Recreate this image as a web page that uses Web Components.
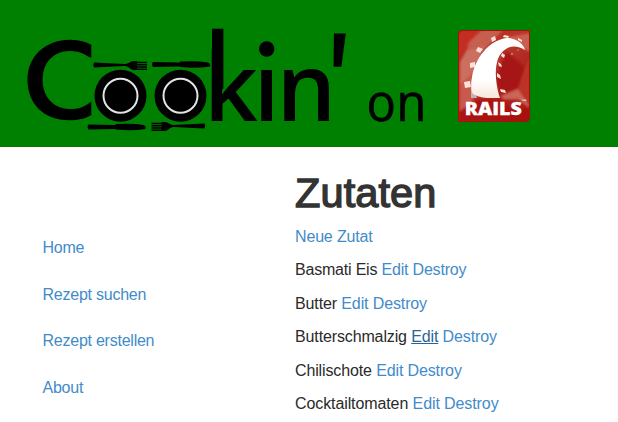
<!DOCTYPE html>
<html lang="de"><head><meta charset="utf-8"><title>Cookin' on Rails</title>
<style>
body{margin:0;background:#fff;color:#2a2a2a;font-family:"Liberation Sans",Arial,sans-serif;font-size:16px;letter-spacing:-.16px;overflow:hidden}
</style></head><body>
<cook-page></cook-page>
<script>
const define=(name,html)=>customElements.define(name,class extends HTMLElement{
  constructor(){super();this.attachShadow({mode:'open'}).innerHTML=html;}
});

define('rails-badge',`<style>:host{display:block;width:72px;height:92px}svg{display:block}</style>
<svg width="72" height="92" viewBox="0 0 72 92">
<defs><linearGradient id="r" x1="0" y1="0" x2="1" y2="1"><stop offset="0" stop-color="#b9271c"/><stop offset=".45" stop-color="#b8352a"/><stop offset="1" stop-color="#a01010"/></linearGradient>
<linearGradient id="w" x1="0" y1="0" x2="0" y2="1"><stop offset=".7" stop-color="#fff"/><stop offset="1" stop-color="#f8e6dc"/></linearGradient>
<clipPath id="b"><path d="M5 0H72V87Q72 92 67 92H0V5Q0 0 5 0Z"/></clipPath>
<filter id="s" x="-10%" y="-10%" width="120%" height="120%"><feGaussianBlur stdDeviation=".9"/></filter></defs>
<g clip-path="url(#b)"><rect width="72" height="92" fill="url(#r)"/>
<g filter="url(#s)"><path d="M0 28L11 12L30 4L24 0H5L0 6Z" fill="#c42d20"/>
<path d="M11 12L24 0H45L27 19L8 22Z" fill="#c65e50"/>
<path d="M8 21L27 16L15 43L2 55V32Z" fill="#cb7060"/>
<path d="M2 55L15 43V70L2 84Z" fill="#c9584e"/>
<path d="M46 8L72 3V22L62 17Z" fill="#cb5e50"/>
<path d="M48 21L67 37L60 59L43 66L38 48Z" fill="#a71714"/>
<path d="M67 37L72 28V77L60 59Z" fill="#bd3328"/>
<path d="M43 66L60 59L72 77L54 81Z" fill="#cb6657"/>
<path d="M0 82L20 69H60L72 78V92H0Z" fill="#a9110f" opacity=".85"/></g>
<path d="M13 48V68H19Z" fill="#c3b2b2"/>
<path d="M67 20C65 12 56 8 49 8C31 10 17 28 14 47C13 56 13 62 15 64C24 69 33 68 42 68C37 53 34 27 48 19C54 15 61 16 67 20Z" fill="url(#w)"/></g>
<g fill="#ffe3da"><path d="M6 52l6-1 1 6-6 1zM12 33l5-1v5l-5 1zM20 17l5 2-3 4-4-2zM33 8l4-2 1 4-4 2zM46 5l5 1-1 2-5-1zM60 8l4 2v2l-4-2zM44 23l3 2-1 3-3-2zM40 32l3 2 1 3-3-1zM39 43l3 2 1 4-4-2zM42 59l5 1 1 3-5-1z"/><circle cx="54" cy="24" r=".7"/><circle cx="60" cy="20" r=".6"/></g>
<path d="M5 .5H71.5V87Q71.5 91.500 67 91.500H.5V5Q.5.5 5 .5Z" fill="none" stroke="#9d160c"/>
<text x="6.800" y="84.500" textLength="57" lengthAdjust="spacingAndGlyphs" style="font:800 17.500px 'Open Sans';letter-spacing:0" fill="#fff" stroke="#fff" stroke-width=".3">RAILS</text>
<text x="63.500" y="73" style="font:bold 5px 'Liberation Sans';letter-spacing:0" fill="#fff">™</text></svg>`);

define('cook-logo',`<style>:host{display:block;width:430px;height:147px}svg{display:block}text{letter-spacing:0}
.c{font:700 111px Lato}.k{font:600 94px "Open Sans"}.on{font:400 52px "Open Sans"}</style>
<svg width="430" height="147" viewBox="0 0 430 147"><defs><clipPath id="cut"><rect width="91.3" height="147"/></clipPath>
<g id="fork"><path d="M0-2.500Q-1.500 0 0 2.500L31 1C35 1 36 5 40 5H53V3.500H43V2.700H53V1.200H43V.5H53V-1H43V-1.700H53V-3.200H43V-4H40C36-4 35-1 31-1Z"/></g>
<g id="knife"><path d="M1-2.500Q-1 0 1 2.500L28 2V2.600Q46 4 58 2Q59-1 56-2Q46-4 28-3V-2Z"/></g></defs>
<g clip-path="url(#cut)"><text class="c" transform="translate(21.900 120) scale(1.09 1)" x="0" y="0" stroke="#008000" stroke-width="1.300">C</text></g>
<circle cx="120.500" cy="95.700" r="26"/><circle cx="120.500" cy="95.700" r="17" fill="none" stroke="#e4e4e4" stroke-width="2"/>
<circle cx="180.500" cy="95.700" r="26"/><circle cx="180.500" cy="95.700" r="17" fill="none" stroke="#e4e4e4" stroke-width="2"/>
<use href="#fork" x="94" y="65"/><use href="#knife" transform="translate(152 64.500)"/>
<use href="#knife" x="87.500" y="127"/><use href="#fork" transform="translate(204.500 126) scale(-1 1)"/>
<rect x="212" y="28.700" width="11.400" height="60"/>
<text class="k" x="204 253.500 276.500" y="121">kin</text><rect x="257" y="38" width="20" height="31.500" fill="#008000"/><circle cx="266.700" cy="49" r="7.700"/>
<text class="k" transform="translate(320.500 125.500) skewX(-4) scale(1.13 1.38)" x="0" y="0">'</text>
<text class="on" transform="translate(366.500 121) scale(.94 1)" x="0 32" y="0" stroke="#000" stroke-width=".7">on</text></svg>`);

define('cook-header',`<style>:host{display:flex;height:147px;background:#008000}rails-badge{margin:30px 0 0 28px}</style>
<cook-logo></cook-logo><rails-badge></rails-badge>`);

define('text-link',`<style>:host{display:inline}a{color:#428bca;text-decoration:none}:host([active]) a{color:#2a6496;text-decoration:underline}</style><a href="#"><slot></slot></a>`);

define('side-nav',`<style>:host{display:flex;flex-direction:column;gap:23.8px;width:252.5px;padding:90px 0 0 42.5px;box-sizing:content-box;line-height:22.86px;letter-spacing:-.24px}</style>
<text-link>Home</text-link><text-link>Rezept suchen</text-link><text-link>Rezept erstellen</text-link><text-link>About</text-link>`);

define('ingredient-row',`<style>:host{display:block;line-height:22.86px;white-space:nowrap}</style><slot></slot>`);

define('ingredient-list',`<style>:host{display:flex;flex-direction:column;gap:10.5px;padding-top:23px}h1{font-size:41.5px;font-weight:400;-webkit-text-stroke:1.4px #333;color:#333;line-height:45px;margin:0 0 .6px;letter-spacing:.1px}</style>
<h1>Zutaten</h1><ingredient-row><text-link>Neue Zutat</text-link></ingredient-row>
<ingredient-row style="letter-spacing:-.2px">Basmati Eis <text-link>Edit</text-link> <text-link>Destroy</text-link></ingredient-row>
<ingredient-row style="letter-spacing:-.12px">Butter <text-link>Edit</text-link> <text-link>Destroy</text-link></ingredient-row>
<ingredient-row style="letter-spacing:-.13px">Butterschmalzig <text-link active>Edit</text-link> <text-link>Destroy</text-link></ingredient-row>
<ingredient-row style="letter-spacing:-.13px">Chilischote <text-link>Edit</text-link> <text-link>Destroy</text-link></ingredient-row>
<ingredient-row style="letter-spacing:-.1px">Cocktailtomaten <text-link>Edit</text-link> <text-link>Destroy</text-link></ingredient-row>`);

define('cook-page',`<style>:host{display:block;height:422px}main{display:flex}</style><cook-header></cook-header><main><side-nav></side-nav><ingredient-list></ingredient-list></main>`);
</script></body></html>
